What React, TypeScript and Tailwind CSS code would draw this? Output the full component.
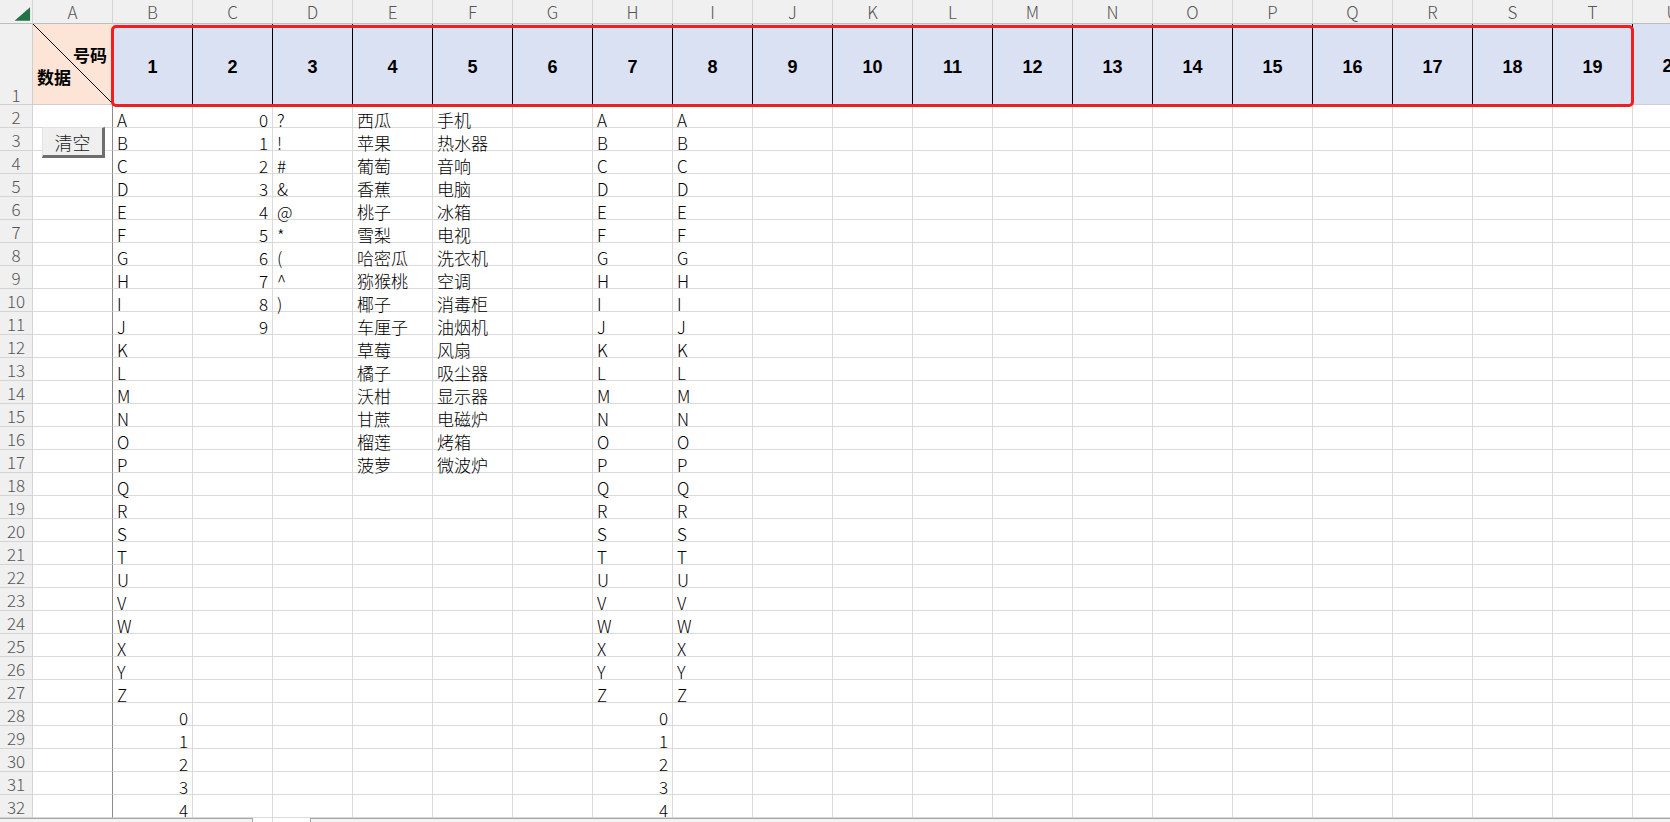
import React from "react";

const COLS = ["A","B","C","D","E","F","G","H","I","J","K","L","M","N","O","P","Q","R","S","T","U"];
const LETTERS = "ABCDEFGHIJKLMNOPQRSTUVWXYZ".split("");
const SYMBOLS = ["?","!","#","&","@","*","(","^",")"];
const FRUITS = ["西瓜","苹果","葡萄","香蕉","桃子","雪梨","哈密瓜","猕猴桃","椰子","车厘子","草莓","橘子","沃柑","甘蔗","榴莲","菠萝"];
const APPL = ["手机","热水器","音响","电脑","冰箱","电视","洗衣机","空调","消毒柜","油烟机","风扇","吸尘器","显示器","电磁炉","烤箱","微波炉"];

type CellVal = { t: string; right: boolean } | null;

function getCell(r: number, c: number): CellVal {
  const i = r - 2;
  if (c === 1 || c === 7) {
    if (i < 26) return { t: LETTERS[i], right: false };
    if (i < 31) return { t: String(i - 26), right: true };
  }
  if (c === 8 && i < 26) return { t: LETTERS[i], right: false };
  if (c === 2 && i < 10) return { t: String(i), right: true };
  if (c === 3 && i < 9) return { t: SYMBOLS[i], right: false };
  if (c === 4 && i < 16) return { t: FRUITS[i], right: false };
  if (c === 5 && i < 16) return { t: APPL[i], right: false };
  return null;
}

export default function App() {
  const rows: number[] = [];
  for (let r = 2; r <= 33; r++) rows.push(r);

  return (
    <div className="relative w-[1670px] h-[822px] overflow-hidden bg-white font-['Noto_Sans_CJK_SC','Noto_Sans',sans-serif] text-black">
      <div className="grid grid-cols-[33px_repeat(21,80px)] grid-rows-[24px_81px_repeat(32,23px)] w-[1713px]">
        {/* corner */}
        <div className="bg-[#f0f0f0] border-r border-b border-r-[#d4d4d4] border-b-[#bdbdbd] flex items-center justify-center">
          <svg width="33" height="24" viewBox="0 0 33 24">
            <polygon points="31,7 31,21 15,21" fill="#217346" />
          </svg>
        </div>
        {COLS.map((l) => (
          <div
            key={l}
            className="bg-[#f0f0f0] border-r border-b border-r-[#d4d4d4] border-b-[#bdbdbd] flex items-center justify-center text-[17px] leading-[22px] font-light text-[#555]"
          >
            {l}
          </div>
        ))}

        {/* row 1 */}
        <div className="bg-[#f0f0f0] border-r border-b border-[#cfcfcf] flex items-end justify-center text-[17px] leading-[15px] font-light text-[#555] pb-[2px]">
          1
        </div>
        <div className="relative bg-[#fce4d6] border-b border-[#cfcfcf] flex flex-col pt-[20px] pl-[4px] pr-[6px] font-bold text-[17px] leading-[22px]">
          <svg className="absolute inset-0 w-full h-full" viewBox="0 0 80 81" preserveAspectRatio="none">
            <line x1="0" y1="0" x2="80" y2="81" stroke="#000" strokeWidth="1" />
          </svg>
          <span className="relative self-end">号码</span>
          <span className="relative self-start">数据</span>
        </div>
        {COLS.slice(1).map((l, k) => (
          <div
            key={"h" + l}
            className={
              k < 19
                ? "bg-[#d9e1f2] border-r border-black flex items-center justify-center pt-[5px] font-['Liberation_Sans',Arial,sans-serif] font-bold text-[18px]"
                : "bg-[#d9e1f2] border-r border-b border-[#cfcfcf] flex items-center justify-center pt-[5px] font-['Liberation_Sans',Arial,sans-serif] font-bold text-[18px]"
            }
          >
            {k + 1}
          </div>
        ))}

        {/* data rows */}
        {rows.map((r) => (
          <React.Fragment key={r}>
            <div className="bg-[#f0f0f0] border-r border-b border-[#d4d4d4] flex items-end justify-center text-[17px] leading-[15px] font-light text-[#555] pb-[3px]">
              {r < 33 ? r : null}
            </div>
            {COLS.map((l, c) => {
              const v = getCell(r, c);
              const cls =
                c === 0
                  ? "border-r border-b border-r-[#8a8a8a] border-b-[#dadada]"
                  : v && v.right
                  ? "border-r border-b border-[#dadada] flex items-end justify-end px-[4px] text-[17px] leading-[15px] font-light"
                  : "border-r border-b border-[#dadada] flex items-end justify-start px-[4px] text-[17px] leading-[15px] font-light whitespace-nowrap";
              return (
                <div key={l + r} className={cls}>
                  {v ? v.t : null}
                </div>
              );
            })}
          </React.Fragment>
        ))}
      </div>

      {/* red selection outline */}
      <div className="absolute left-[111px] top-[25px] w-[1523px] h-[82px] border-[3px] border-[#f01e1e] rounded-[5px] pointer-events-none" />

      {/* button */}
      <button className="absolute left-[42px] top-[127px] w-[63px] h-[31px] bg-[#efefef] border-t border-l border-t-[#e2e2e2] border-l-[#e2e2e2] border-r-[3px] border-b-[3px] border-r-[#6e6e6e] border-b-[#6e6e6e] flex items-center justify-center text-[18px] leading-[20px] font-light text-[#222]">
        清空
      </button>

      {/* sheet tab bar (clipped) */}
      <div className="absolute left-0 top-[818px] w-[253px] h-[8px] bg-[#f3f3f3] border-t border-r border-[#a6a6a6]" />
      <div className="absolute left-[310px] top-[818px] w-[1360px] h-[8px] bg-[#f3f3f3] border-t border-l border-[#a6a6a6]" />
    </div>
  );
}
